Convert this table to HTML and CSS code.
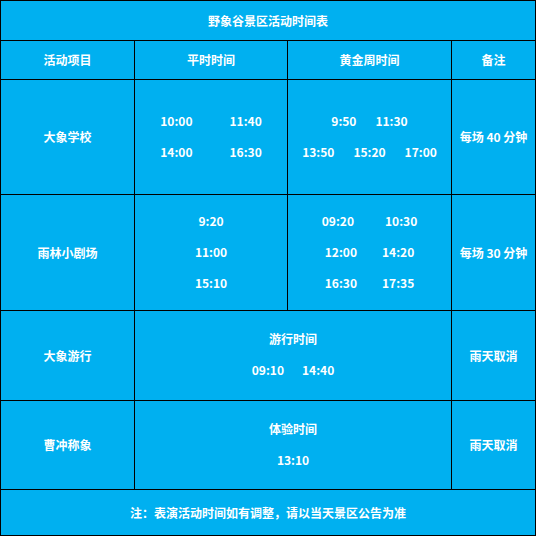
FILE: index.html
```html
<!DOCTYPE html>
<html lang="zh-CN">
<head>
<meta charset="utf-8">
<title>野象谷景区活动时间表</title>
<link rel="stylesheet" href="styles.css">
</head>
<body>
<div class="sheet">
  <div class="cell span-all">野象谷景区活动时间表</div>

  <div class="cell">活动项目</div>
  <div class="cell">平时时间</div>
  <div class="cell">黄金周时间</div>
  <div class="cell">备注</div>

  <div class="cell">大象学校</div>
  <div class="cell stack">
    <div class="line gap-37"><span>10:00</span><span>11:40</span></div>
    <div class="line gap-37"><span>14:00</span><span>16:30</span></div>
  </div>
  <div class="cell stack">
    <div class="line gap-19"><span>9:50</span><span>11:30</span></div>
    <div class="line gap-19"><span>13:50</span><span>15:20</span><span>17:00</span></div>
  </div>
  <div class="cell">每场 40 分钟</div>

  <div class="cell">雨林小剧场</div>
  <div class="cell stack">
    <div class="line">9:20</div>
    <div class="line">11:00</div>
    <div class="line">15:10</div>
  </div>
  <div class="cell stack">
    <div class="line gap-31"><span>09:20</span><span>10:30</span></div>
    <div class="line gap-25"><span>12:00</span><span>14:20</span></div>
    <div class="line gap-25"><span>16:30</span><span>17:35</span></div>
  </div>
  <div class="cell">每场 30 分钟</div>

  <div class="cell">大象游行</div>
  <div class="cell span-2 stack">
    <div class="line">游行时间</div>
    <div class="line gap-18"><span>09:10</span><span>14:40</span></div>
  </div>
  <div class="cell">雨天取消</div>

  <div class="cell">曹冲称象</div>
  <div class="cell span-2 stack">
    <div class="line">体验时间</div>
    <div class="line">13:10</div>
  </div>
  <div class="cell">雨天取消</div>

  <div class="cell span-all">注：表演活动时间如有调整，请以当天景区公告为准</div>
</div>
</body>
</html>
```

FILE: styles.css
```css
html, body {
  margin: 0;
  padding: 0;
  background: #ffffff;
}

.sheet {
  display: grid;
  grid-template-columns: 133px 152px 163px 83px;
  grid-template-rows: 39px 38px 114px 115px 89px 88px 45px;
  gap: 1px;
  padding: 1px;
  width: 536px;
  box-sizing: border-box;
  background: #000000;
  font-family: "Noto Sans CJK SC", "Microsoft YaHei", sans-serif;
  font-size: 12px;
  font-weight: bold;
  color: #ffffff;
}

.cell {
  background: #00b0f0;
  display: flex;
  flex-direction: column;
  align-items: center;
  justify-content: center;
  text-align: center;
  line-height: 16px;
  white-space: nowrap;
}

.stack {
  padding-bottom: 3px;
}

.span-all {
  grid-column: 1 / -1;
}

.span-2 {
  grid-column: 2 / 4;
}

.line {
  display: flex;
  justify-content: center;
  line-height: 31px;
  height: 31px;
}

.gap-37 { gap: 37px; }
.gap-31 { gap: 31px; }
.gap-25 { gap: 25px; }
.gap-19 { gap: 19px; }
.gap-18 { gap: 18px; }
```
